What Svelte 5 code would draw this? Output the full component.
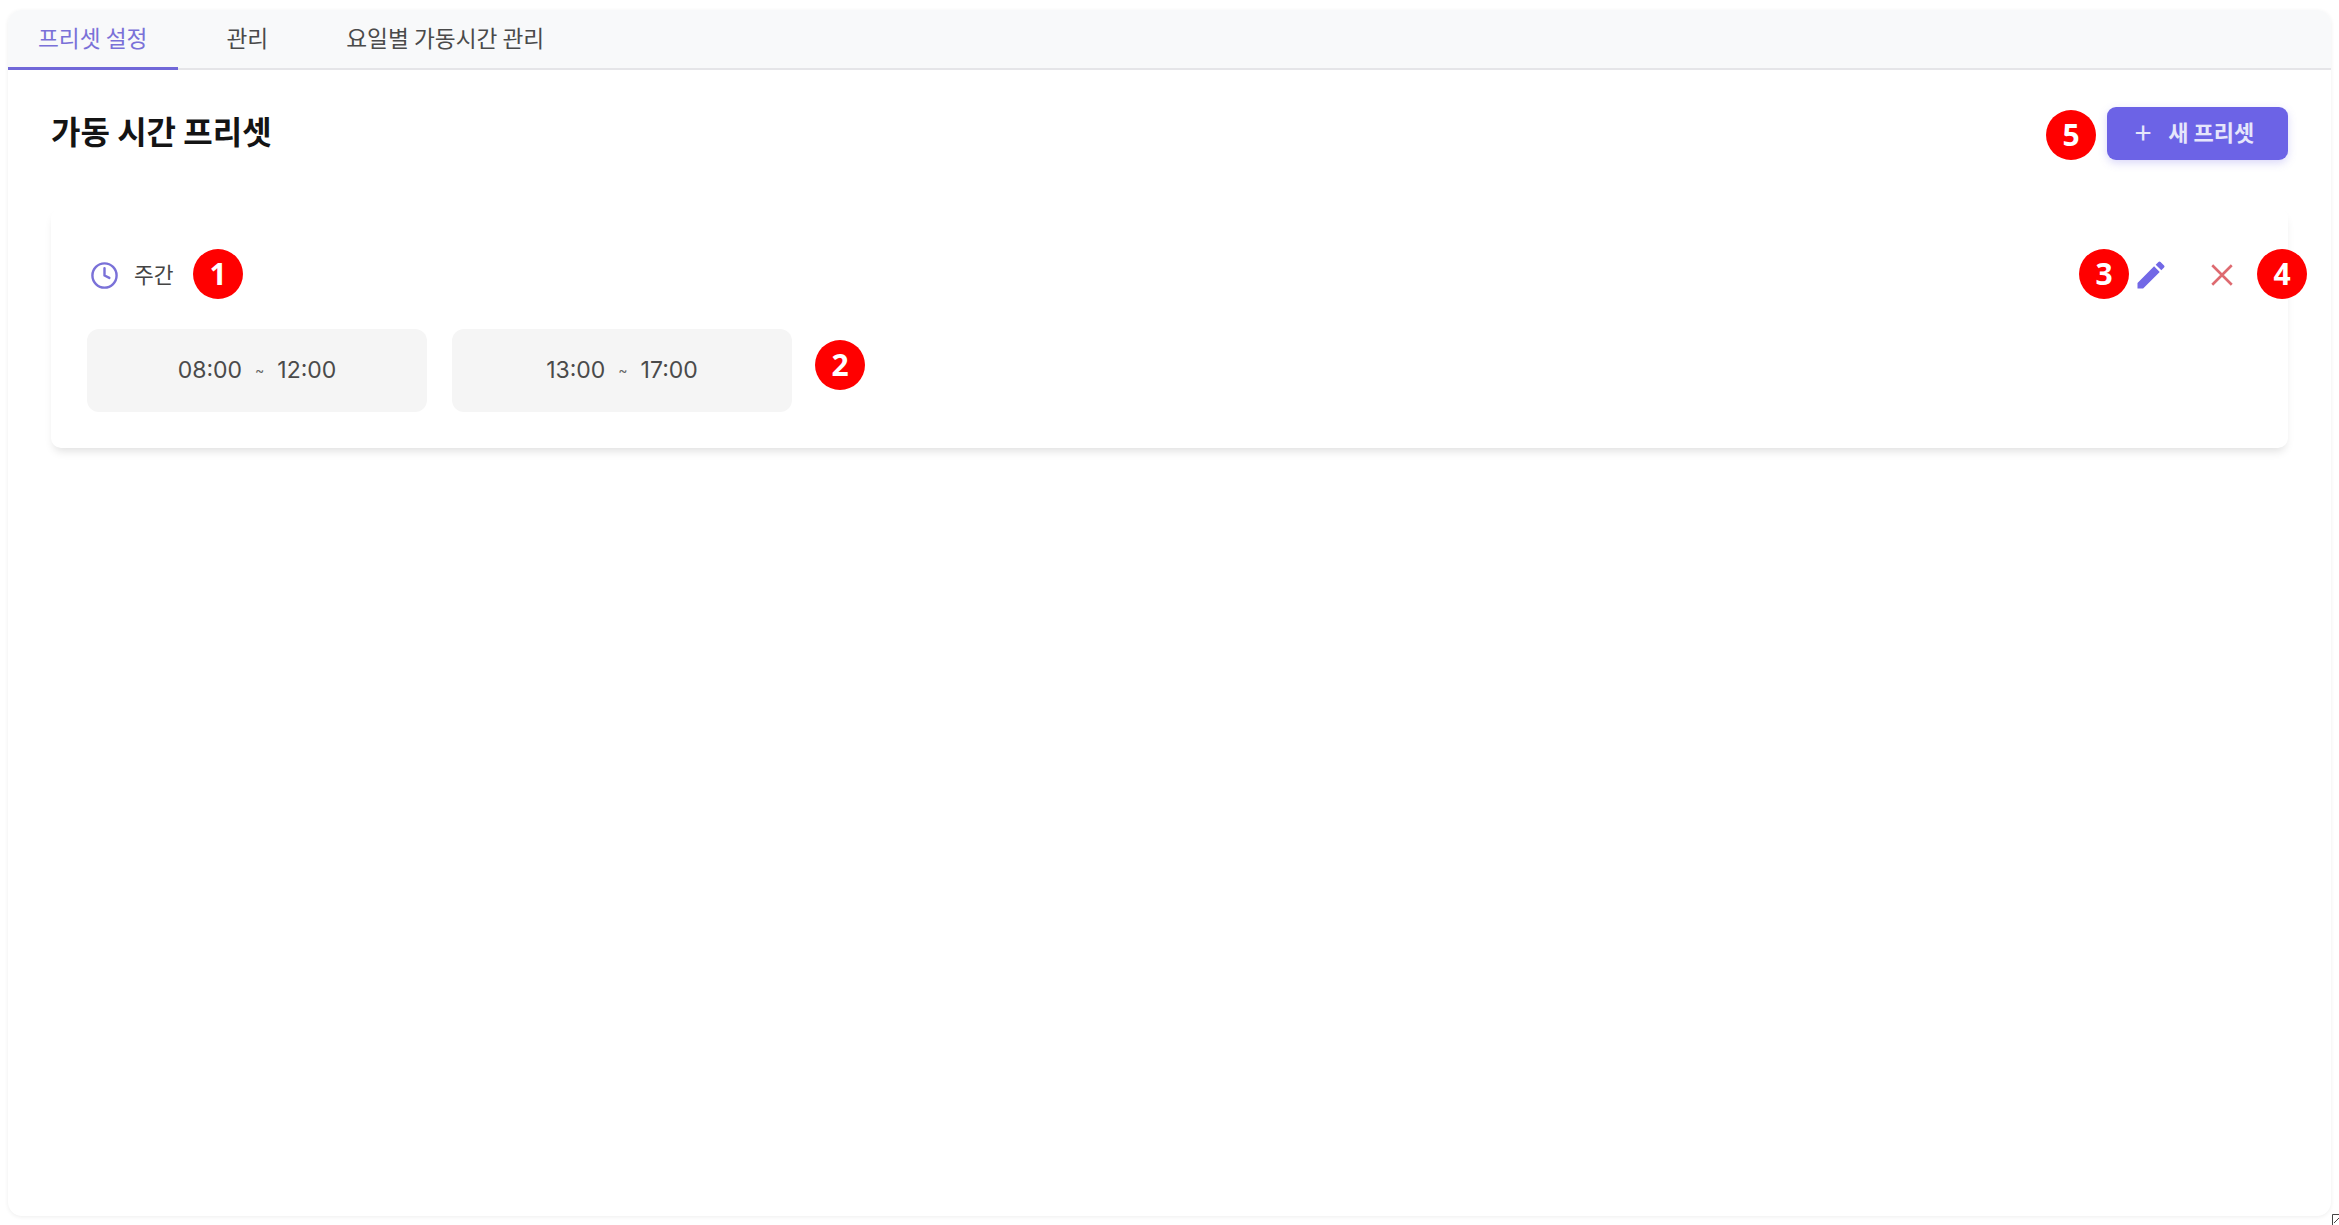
<script lang="ts">
	const tabs = ['프리셋 설정', '관리', '요일별 가동시간 관리'];
	const ranges = [
		['08:00', '12:00'],
		['13:00', '17:00']
	];
	// callout markers sit on top of the capture
	const markers = [
		{ n: 1, x: 193, y: 249 },
		{ n: 2, x: 815, y: 340 },
		{ n: 3, x: 2079, y: 249 },
		{ n: 4, x: 2257, y: 249 },
		{ n: 5, x: 2046, y: 110 }
	];
</script>

<main>
	<div class="panel">
		<nav class="tabs">
			{#each tabs as tab, i}
				<button class="tab" class:active={i === 0}>{tab}</button>
			{/each}
		</nav>

		<section class="content">
			<header class="head">
				<h1>가동 시간 프리셋</h1>
				<button class="add"><span class="plus">+</span><span class="label">새 프리셋</span></button>
			</header>

			<article class="card">
				<div class="row">
					<svg class="clock" viewBox="0 0 24 24" fill="none" stroke="currentColor" stroke-width="2" stroke-linecap="round" stroke-linejoin="round">
						<circle cx="12" cy="12" r="10" />
						<path d="M12 6v6l4 2" />
					</svg>
					<span class="name">주간</span>
					<button class="icon edit" aria-label="edit">
						<svg viewBox="0 0 24 24" fill="currentColor">
							<path d="M3 17.25V21h3.75L17.81 9.94l-3.75-3.75L3 17.25zM20.71 7.04a1 1 0 0 0 0-1.41l-2.34-2.34a1 1 0 0 0-1.41 0l-1.83 1.83 3.75 3.75 1.83-1.83z" />
						</svg>
					</button>
					<button class="icon del" aria-label="delete">
						<svg viewBox="0 0 24 24" fill="none" stroke="currentColor" stroke-width="2.4">
							<path d="M3 3l18 18M21 3L3 21" />
						</svg>
					</button>
				</div>
				<div class="ranges">
					{#each ranges as [from, to]}
						<div class="range"><span class="time">{from}<span class="sep">~</span>{to}</span></div>
					{/each}
				</div>
			</article>
		</section>
	</div>

	{#each markers as m}
		<span class="marker" style="left:{m.x}px;top:{m.y}px">{m.n}</span>
	{/each}

	<svg class="grip" viewBox="0 0 8 11" fill="none" stroke="#444" stroke-width="1">
		<path d="M.5 11V.5H8M2 9l5-5" />
	</svg>
</main>

<style>
	:global(body) {
		background: #fff;
		font-family: 'Noto Sans CJK KR', 'Noto Sans', sans-serif;
	}

	main {
		position: relative;
		box-sizing: border-box;
		width: 2339px;
		height: 1225px;
		padding: 10px 8px 9px 8px;
		overflow: hidden;
	}

	.panel {
		display: flex;
		flex-direction: column;
		height: 100%;
		border-radius: 14px;
		background: #fff;
		box-shadow: 0 1px 4px rgba(0, 0, 0, 0.07);
		overflow: hidden;
	}

	.tabs {
		display: flex;
		gap: 18px;
		height: 60px;
		box-sizing: border-box;
		background: #f8f9fa;
		border-bottom: 2px solid #e5e5e8;
	}

	.tab {
		height: 60px;
		padding: 0 30px 3px;
		border: 0;
		border-bottom: 3px solid transparent;
		background: none;
		font: 400 22.7px 'Noto Sans CJK KR', sans-serif;
		color: #4a4a4a;
	}

	.tab.active {
		padding-right: 31px;
		color: #7a71d8;
		border-bottom-color: #7168d8;
	}

	.content {
		padding: 37px 43px 0 43px;
	}

	.head {
		display: flex;
		justify-content: space-between;
		align-items: center;
		margin-bottom: 48px;
	}

	h1 {
		margin: 0;
		font-size: 32px;
		line-height: 50px;
		font-weight: 700;
		color: #141414;
		position: relative;
		bottom: 4px;
	}

	.add {
		display: flex;
		align-items: center;
		justify-content: center;
		width: 181px;
		height: 53px;
		padding: 0 6px 0 0;
		border: 0;
		border-radius: 9px;
		background: #6c63e6;
		box-shadow: 0 3px 8px rgba(108, 99, 230, 0.25);
		color: #e6e6fb;
		font: 600 22px 'Noto Sans CJK KR', sans-serif;
	}

	.plus {
		margin-right: 17px;
		font-size: 30px;
		font-weight: 400;
		line-height: 1;
		position: relative;
		bottom: 3px;
	}

	.label {
		position: relative;
		bottom: 3px;
	}

	.card {
		padding: 45px 37px 36px 36px;
		border-radius: 10px;
		background: #fff;
		box-shadow: 0 6px 10px -3px rgba(0, 0, 0, 0.13);
	}

	.row {
		display: flex;
		align-items: center;
		height: 44px;
		margin-bottom: 32px;
		padding: 0 7px 0 3px;
	}

	.clock {
		width: 29px;
		height: 29px;
		color: #7a71d8;
	}

	.name {
		flex: 1;
		margin-left: 15px;
		font-size: 21.5px;
		color: #444;
		position: relative;
		bottom: 2px;
	}

	.icon {
		display: flex;
		align-items: center;
		justify-content: center;
		width: 44px;
		height: 44px;
		padding: 0;
		border: 0;
		background: none;
	}

	.edit {
		margin-right: 27px;
		color: #7268e6;
	}

	.edit svg {
		width: 36px;
		height: 36px;
	}

	.del {
		color: #de6a70;
	}

	.del svg {
		width: 26px;
		height: 26px;
	}

	.ranges {
		display: flex;
		gap: 25px;
	}

	.range {
		display: flex;
		align-items: center;
		justify-content: center;
		width: 340px;
		height: 83px;
		border-radius: 12px;
		background: #f5f5f5;
		font: 400 23px Inter, 'Noto Sans', sans-serif;
		color: #4a4a4a;
	}

	.time {
		position: relative;
		bottom: 1px;
	}

	.sep {
		position: relative;
		bottom: 3px;
		margin: 0 13px;
		font-size: 14px;
		color: #666;
	}

	.marker {
		position: absolute;
		display: flex;
		align-items: center;
		justify-content: center;
		box-sizing: border-box;
		width: 50px;
		height: 50px;
		padding-bottom: 2px;
		border-radius: 50%;
		background: #ff0000;
		color: #fff;
		font: 700 30px 'Noto Sans', sans-serif;
	}

	.grip {
		position: absolute;
		left: 2332px;
		top: 1214px;
		width: 8px;
		height: 11px;
	}
</style>
